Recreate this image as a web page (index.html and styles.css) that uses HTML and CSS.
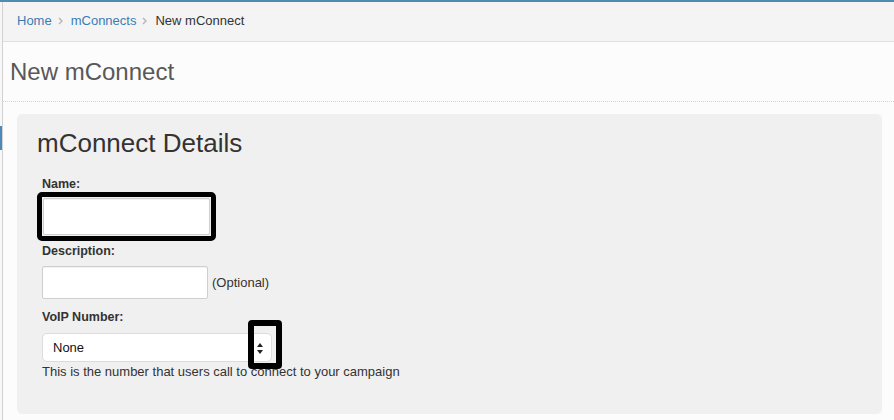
FILE: index.html
```html
<!DOCTYPE html>
<html lang="en">
<head>
    <meta charset="UTF-8">
    <meta name="viewport" content="width=device-width, initial-scale=1.0">
    <title>New mConnect</title>
    <link rel="stylesheet" href="styles.css">
</head>
<body>
    <div class="app">
        <!-- Barra lateral (recolhida) -->
        <div class="sidebar">
            <div class="sidebar-active"></div>
        </div>

        <div class="main">
            <!-- Breadcrumb -->
            <div class="breadcrumb">
                <a href="#">Home</a>
                <svg class="crumb-sep" width="5" height="8" viewBox="0 0 5 8"><path d="M1 1l3 3-3 3" fill="none" stroke="#b5b5b5" stroke-width="1.4"/></svg>
                <a href="#">mConnects</a>
                <svg class="crumb-sep" width="5" height="8" viewBox="0 0 5 8"><path d="M1 1l3 3-3 3" fill="none" stroke="#b5b5b5" stroke-width="1.4"/></svg>
                <span class="crumb-current">New mConnect</span>
            </div>

            <!-- Titulo da pagina -->
            <div class="page-header">
                <h1>New mConnect</h1>
            </div>

            <!-- Painel do formulario -->
            <div class="panel">
                <h2>mConnect Details</h2>
                <div class="form">
                    <label class="field-label" for="name">Name:</label>
                    <div class="highlight-box">
                        <input type="text" id="name" class="text-input name-input">
                    </div>

                    <label class="field-label desc-label" for="description">Description:</label>
                    <div class="field-row">
                        <input type="text" id="description" class="text-input desc-input">
                        <span class="optional">(Optional)</span>
                    </div>

                    <label class="field-label voip-label">VoIP Number:</label>
                    <div class="select-box">
                        <span>None</span>
                        <svg class="select-arrows" width="6" height="11" viewBox="0 0 6 11"><path d="M3 0L6 4H0z M3 11L0 7h6z" fill="#222"/></svg>
                        <div class="arrow-highlight"></div>
                    </div>
                    <p class="help-text">This is the number that users call to connect to your campaign</p>
                </div>
            </div>
        </div>
    </div>
</body>
</html>
```

FILE: styles.css
```css
/* Geral */
body { margin: 0; background: #fcfcfc; font-family: "Liberation Sans", Arial, sans-serif; color: #333; }
.app { display: flex; border-top: 2px solid #4e8cb2; min-height: 418px; }

/* Barra lateral */
.sidebar { width: 2px; background: #f7f7f7; border-right: 1px solid #d2d2d2; }
.sidebar-active { margin-top: 124px; height: 24px; background: #4a8ab8; }

.main { flex: 1; }

/* Breadcrumb */
.breadcrumb { display: flex; align-items: center; height: 40px; padding: 0 0 2px 14px; box-sizing: border-box; background: #f4f4f4; border-bottom: 1px solid #e0e0e0; font-size: 13px; }
.breadcrumb a { color: #3b7cb5; text-decoration: none; }
.crumb-sep { margin: 0 8px 0 6px; }
.crumb-current { color: #333; }

/* Titulo */
.page-header { display: flex; align-items: center; height: 60px; padding-left: 7px; border-bottom: 1px dotted #d5d5d5; box-sizing: border-box; }
.page-header h1 { margin: 0; font-size: 24px; font-weight: normal; color: #585858; }

/* Painel */
.panel { margin: 12px 12px 0 14px; height: 300px; box-sizing: border-box; padding: 14px 20px 0; background: #f0f0f0; border-radius: 5px; }
.panel h2 { margin: 0; font-size: 26px; line-height: 30px; font-weight: normal; color: #333; }

/* Formulario */
.form { padding-left: 5px; margin-top: 18px; }
.field-label { display: block; font-size: 12.5px; line-height: 16px; font-weight: bold; color: #333; }
.desc-label { margin-top: 2px; }
.voip-label { margin-top: 10px; }

.highlight-box { display: inline-block; margin-left: -5px; padding: 1px; border: 5px solid #000; border-radius: 5px; vertical-align: top; }
.text-input { box-sizing: border-box; border: 1px solid #cfcfcf; background: #fff; border-radius: 2px; box-shadow: inset 0 1px 1px rgba(0, 0, 0, 0.06); margin: 0; display: block; }
.name-input { width: 167px; height: 37px; }

.field-row { display: flex; align-items: center; margin-top: 7px; }
.desc-input { width: 166px; height: 33px; }
.optional { margin-left: 4px; font-size: 13px; color: #333; }

.select-box { position: relative; display: flex; align-items: center; justify-content: space-between; width: 230px; height: 29px; margin-top: 8px; padding: 0 8px 0 10px; box-sizing: border-box; background: #fff; border: 1px solid #dcdcdc; border-radius: 5px; font-size: 13px; color: #111; }
.select-arrows { margin-top: 1px; }
.arrow-highlight { position: absolute; left: 205px; top: -14px; width: 22px; height: 37px; border: 6px solid #000; border-radius: 4px; }

.help-text { margin: 2px 0 0; font-size: 13px; line-height: 15px; color: #333; }
```
